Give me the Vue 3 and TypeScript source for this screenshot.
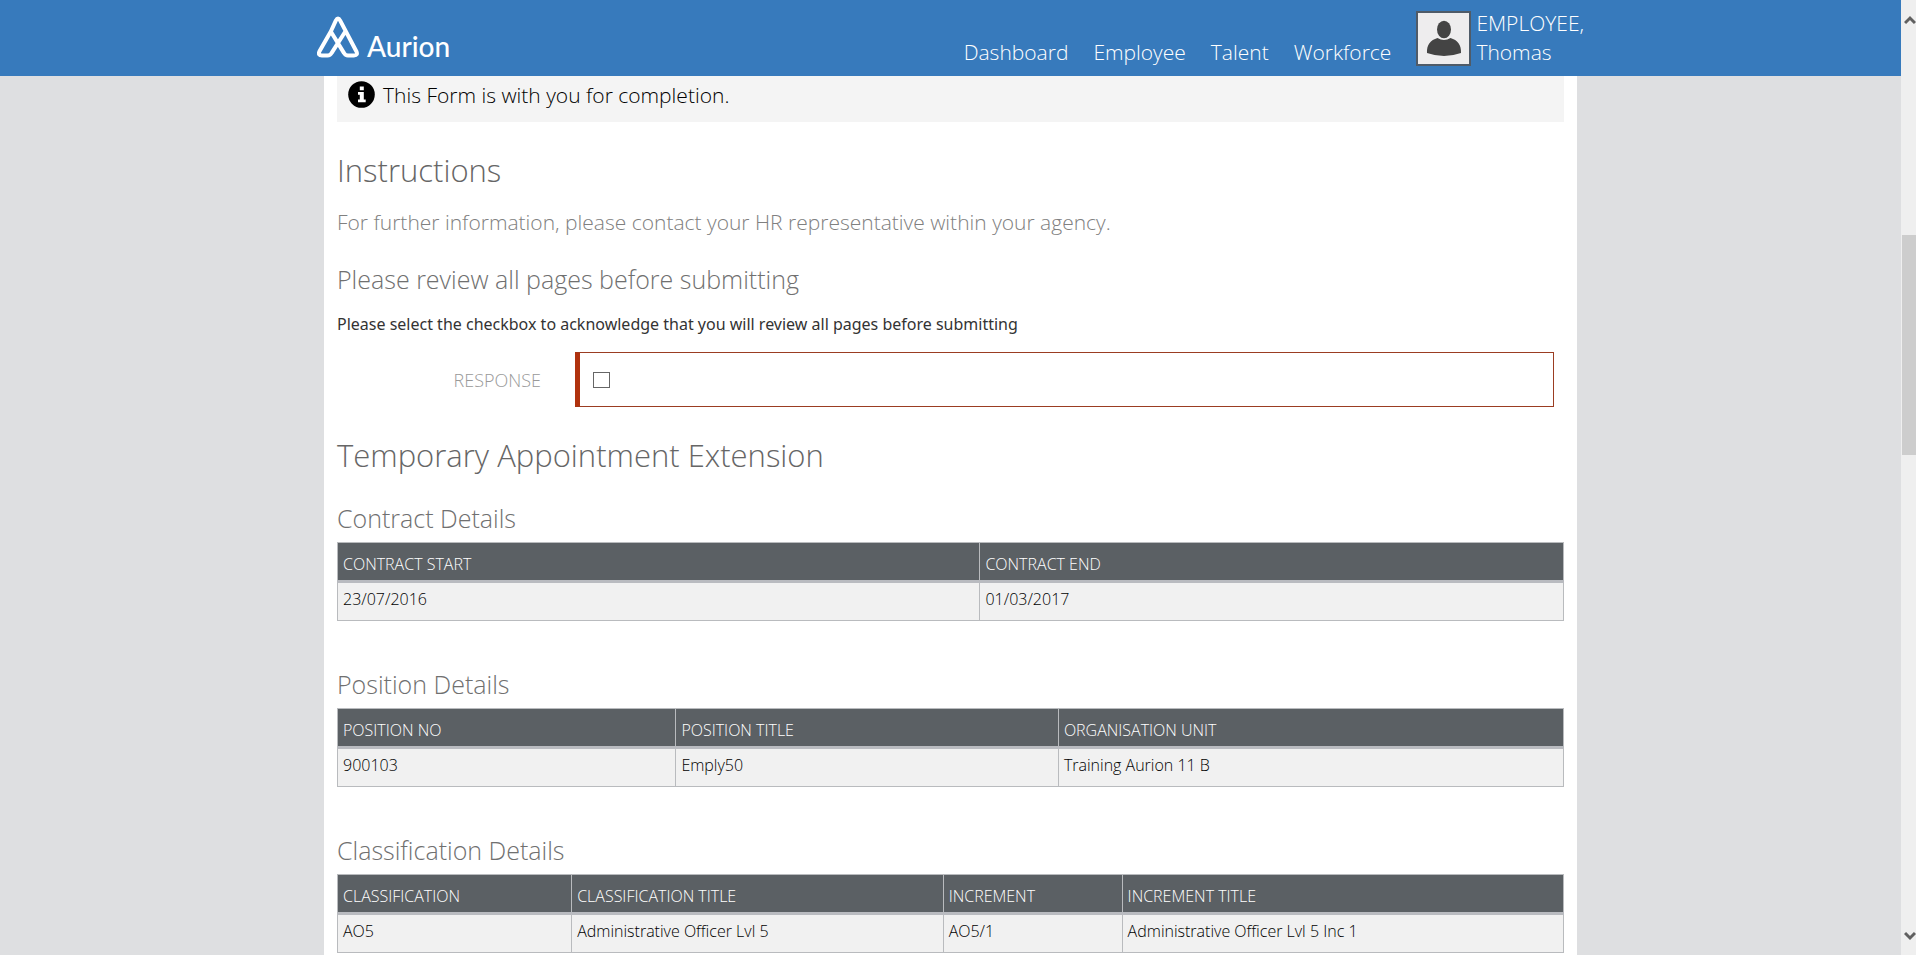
<script setup lang="ts">
import { ref } from 'vue'

interface Column {
  title: string
  value: string
  width: number
}

interface DetailTable {
  id: string
  heading: string
  columns: Column[]
}

const navigation: string[] = ['Dashboard', 'Employee', 'Talent', 'Workforce']

const acknowledged = ref<boolean>(false)

const tables: DetailTable[] = [
  {
    id: 'contract',
    heading: 'Contract Details',
    columns: [
      { title: 'CONTRACT START', value: '23/07/2016', width: 52.4 },
      { title: 'CONTRACT END', value: '01/03/2017', width: 47.6 },
    ],
  },
  {
    id: 'position',
    heading: 'Position Details',
    columns: [
      { title: 'POSITION NO', value: '900103', width: 27.6 },
      { title: 'POSITION TITLE', value: 'Emply50', width: 31.2 },
      { title: 'ORGANISATION UNIT', value: 'Training Aurion 11 B', width: 41.2 },
    ],
  },
  {
    id: 'classification',
    heading: 'Classification Details',
    columns: [
      { title: 'CLASSIFICATION', value: 'AO5', width: 19.1 },
      { title: 'CLASSIFICATION TITLE', value: 'Administrative Officer Lvl 5', width: 30.3 },
      { title: 'INCREMENT', value: 'AO5/1', width: 14.6 },
      { title: 'INCREMENT TITLE', value: 'Administrative Officer Lvl 5 Inc 1', width: 36 },
    ],
  },
]
</script>

<template>
  <div class="shell">
    <div class="page">
      <header class="topbar">
        <div class="topbar-inner">
          <a class="brand" href="#">
            <svg class="brand-mark" viewBox="0 0 42 42" aria-hidden="true">
              <path
                d="M13.8 15.5 L18.8 4.6 Q21 .2 23.2 4.6 L39.3 35.2 Q41.3 39.5 37 39.5 H31 Q28.3 39.5 26.9 36.9 L13.8 15.5 L2.5 35.2 Q.6 39.5 5 39.5 H10.5 Q13.3 39.5 14.7 36.9 L28.3 15.5"
              />
            </svg>
            <span class="brand-name">Aurion</span>
          </a>
          <nav class="nav">
            <a v-for="item in navigation" :key="item" href="#">{{ item }}</a>
          </nav>
          <button class="account" type="button">
            <svg class="avatar" viewBox="0 0 51 51" aria-hidden="true">
              <ellipse cx="26" cy="16.5" rx="7" ry="8.8" />
              <path d="M9 40 C8.500 32 12.500 27 19.500 25 Q26 29 32.500 25 C39.500 27 43.500 32 43 40 Q26 46 9 40Z" />
            </svg>
            <span class="account-name">EMPLOYEE,<br />Thomas</span>
          </button>
        </div>
      </header>

      <main class="content">
        <div class="notice">
          <svg class="notice-icon" viewBox="0 0 27 27" aria-hidden="true">
            <circle cx="13.500" cy="13.500" r="13.300" />
            <path d="M11.800 5.500h4v3.700h-4zM10 11h5.800v7.500h1.900v2.700H10v-2.700h1.800v-4.800H10z" />
          </svg>
          <span>This Form is with you for completion.</span>
        </div>

        <h1>Instructions</h1>
        <p class="lead">For further information, please contact your HR representative within your agency.</p>

        <h2>Please review all pages before submitting</h2>
        <p class="hint">Please select the checkbox to acknowledge that you will review all pages before submitting</p>

        <div class="field">
          <label for="response">RESPONSE</label>
          <div class="field-box">
            <input id="response" v-model="acknowledged" type="checkbox" />
          </div>
        </div>

        <h1 class="form-title">Temporary Appointment Extension</h1>

        <section v-for="table in tables" :key="table.id" class="details">
          <h2 :id="table.id">{{ table.heading }}</h2>
          <table :aria-labelledby="table.id">
            <colgroup>
              <col v-for="col in table.columns" :key="col.title" :style="{ width: col.width + '%' }" />
            </colgroup>
            <thead>
              <tr>
                <th v-for="col in table.columns" :key="col.title" scope="col">{{ col.title }}</th>
              </tr>
            </thead>
            <tbody>
              <tr>
                <td v-for="col in table.columns" :key="col.title">{{ col.value }}</td>
              </tr>
            </tbody>
          </table>
        </section>
      </main>
    </div>

    <div class="scrollbar" aria-hidden="true">
      <svg class="arrow" viewBox="0 0 12 10"><path d="M1 8 L6 3 L11 8" /></svg>
      <div class="track"><div class="thumb"></div></div>
      <svg class="arrow" viewBox="0 0 12 10"><path d="M1 2 L6 7 L11 2" /></svg>
    </div>
  </div>
</template>

<style>
body {
  margin: 0;
  overflow: hidden;
}
</style>

<style scoped>
.shell {
  display: flex;
  height: 100vh;
  overflow: hidden;
  font-family: 'Open Sans', 'Noto Sans', sans-serif;
  font-weight: 300;
  color: #000;
}

.page {
  flex: 1;
  min-width: 0;
  display: flex;
  flex-direction: column;
  background: #dedfe1;
}

.topbar {
  flex: none;
  background: #377abc;
}

.topbar-inner {
  display: flex;
  box-sizing: border-box;
  max-width: 1267px;
  height: 76px;
  margin: 0 auto;
}

.brand {
  display: flex;
  align-items: flex-start;
  gap: 8px;
  padding-top: 16px;
  color: #fff;
  text-decoration: none;
}

.brand-mark {
  width: 42px;
  height: 42px;
  fill: none;
  stroke: #fff;
  stroke-width: 4;
  stroke-linejoin: round;
}

.brand-name {
  padding-top: 12px;
  font-family: Lato, sans-serif;
  font-size: 28px;
  line-height: 36px;
  font-weight: 500;
}

.nav {
  display: flex;
  gap: 25px;
  margin-left: auto;
  padding-top: 38px;
}

.nav a {
  color: #fff;
  font-size: 21px;
  line-height: 29px;
  text-decoration: none;
}

.account {
  display: flex;
  align-items: flex-start;
  gap: 5px;
  margin: 0 0 0 25px;
  padding: 9px 0 0;
  border: 0;
  background: none;
  color: #fff;
  font: inherit;
  font-size: 21px;
  line-height: 29px;
  text-align: left;
}

.avatar {
  width: 51px;
  height: 51px;
  margin-top: 2px;
  border: 2px solid #4f5b68;
  background: #eeedee;
  fill: #444;
}

.content {
  flex: 1 0 auto;
  box-sizing: border-box;
  width: 100%;
  max-width: 1253px;
  margin: 0 auto;
  padding: 0 13px;
  background: #fff;
}

.notice {
  display: flex;
  gap: 8px;
  padding: 5px 11px 12px;
  background: #f4f4f4;
  font-size: 21px;
  line-height: 29px;
}

.notice-icon {
  width: 27px;
  height: 27px;
}

.notice-icon path {
  fill: #fff;
}

h1 {
  margin: 27px 0 0;
  color: #666;
  font-size: 31px;
  line-height: 42px;
  font-weight: 300;
}

h2 {
  margin: 0;
  color: #707070;
  font-size: 25px;
  line-height: 34px;
  font-weight: 300;
}

.lead {
  margin: 17px 0 25px;
  color: #808080;
  font-size: 21px;
  line-height: 29px;
}

.hint {
  margin: 17px 0;
  color: #333;
  font-family: 'Noto Sans', 'Open Sans', sans-serif;
  font-size: 16px;
  line-height: 22px;
  font-weight: 400;
}

.field {
  display: flex;
  align-items: center;
  gap: 34px;
  padding-right: 10px;
}

.field label {
  flex: 0 0 204px;
  color: #999;
  font-size: 18px;
  line-height: 24px;
  text-align: right;
}

.field-box {
  flex: 1;
  display: flex;
  align-items: center;
  box-sizing: border-box;
  height: 55px;
  padding-left: 13px;
  border: 1px solid #9b3d22;
  border-left: 5px solid #b0320e;
}

.field-box input {
  appearance: none;
  box-sizing: border-box;
  width: 17px;
  height: 16px;
  margin: 0;
  border: 1px solid #666;
  background: #fff;
}

.field-box input:checked {
  background: #666;
}

.form-title {
  margin-bottom: 25px;
}

.details {
  margin-bottom: 46px;
}

table {
  width: 100%;
  margin-top: 7px;
  border-collapse: collapse;
  table-layout: fixed;
  font-size: 16px;
  line-height: 22px;
}

th,
td {
  border: 1px solid #b9bbbe;
  font-weight: 300;
  text-align: left;
}

th {
  padding: 10px 5px 5px;
  border-bottom: 3px solid #b9bbc0;
  background: #5b6064;
  color: #fff;
}

td {
  padding: 5px 5px 10px;
  background: #f1f1f1;
}

.scrollbar {
  flex: none;
  box-sizing: border-box;
  display: flex;
  flex-direction: column;
  width: 15px;
  padding: 15px 0 14px 1px;
  background: #efefef;
}

.arrow {
  width: 12px;
  height: 10px;
  margin-left: 2px;
  fill: none;
  stroke: #606060;
  stroke-width: 3;
}

.track {
  flex: 1;
  display: flex;
  flex-direction: column;
}

.track::before {
  content: '';
  flex: 210;
}

.track::after {
  content: '';
  flex: 476;
}

.thumb {
  flex: 220;
  background: #cdcdcd;
}
</style>
